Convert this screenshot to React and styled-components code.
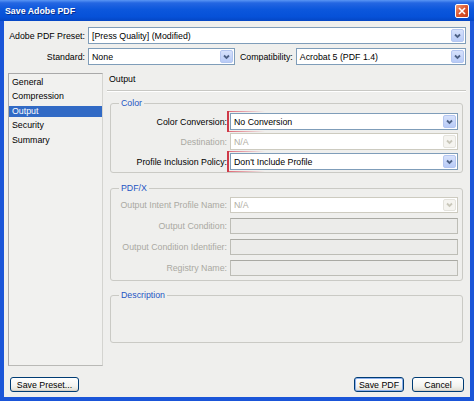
import React from "react";
import styled, { createGlobalStyle } from "styled-components";

const GlobalStyle = createGlobalStyle`
  html, body { margin: 0; padding: 0; background: #fff; }
  body { font-family: "Liberation Sans", Arial, sans-serif; }
`;

const Window = styled.div`
  width: 474px;
  height: 401px;
  display: flex;
  flex-direction: column;
  overflow: hidden;
  font-family: "Liberation Sans", Arial, sans-serif;
  font-size: 8.8px;
  color: #000;
`;

const TitleBar = styled.div`
  height: 21px;
  flex: none;
  display: flex;
  align-items: center;
  justify-content: space-between;
  padding: 0 5px;
  background: linear-gradient(
    to bottom,
    #5a96f4 0%,
    #2466e2 14%,
    #0c57dc 45%,
    #0651d8 80%,
    #0546c4 100%
  );
`;

const Title = styled.span`
  color: #fff;
  font-weight: bold;
  font-size: 8.8px;
  text-shadow: 1px 1px 0 #0a2e8a;
`;

const CloseButton = styled.div`
  width: 14px;
  height: 14px;
  box-sizing: border-box;
  border: 1px solid #fff;
  border-radius: 2px;
  background: linear-gradient(135deg, #f29a72, #dc5630 50%, #c23f1b);
  display: flex;
  align-items: center;
  justify-content: center;
`;

const Frame = styled.div`
  flex: 1;
  min-height: 0;
  display: flex;
  flex-direction: column;
  border: 4px solid #1a55d8;
  border-top: none;
  background: #efefed;
  padding: 6px 4px 5px;
`;

const TopRow = styled.div`
  display: flex;
  align-items: center;
  gap: 3px;
  & + & {
    margin-top: 4px;
  }
`;

const RowLabel = styled.span`
  flex: none;
  width: ${(p) => (p.$width ? `${p.$width}px` : "auto")};
  margin-left: ${(p) => p.$offset || 0}px;
  text-align: right;
  white-space: nowrap;
  color: ${(p) => (p.$disabled ? "#aaa9a2" : "#000")};
`;

const SelectBox = styled.div`
  height: ${(p) => p.$h || 17}px;
  box-sizing: border-box;
  display: flex;
  align-items: center;
  border: 1px solid ${(p) => (p.$disabled ? "#cdcbc0" : "#7f9db9")};
  background: #fff;
  color: ${(p) => (p.$disabled ? "#b0aea4" : "#000")};
  min-width: 0;
  ${(p) => (p.$width ? `width:${p.$width}px; flex:none;` : "flex:1;")}
`;

const SelectText = styled.span`
  flex: 1;
  padding-left: 3px;
  white-space: nowrap;
  overflow: hidden;
`;

const ArrowBtn = styled.span`
  width: 13px;
  align-self: stretch;
  margin: 1px;
  box-sizing: border-box;
  border-radius: 2px;
  border: 1px solid ${(p) => (p.$disabled ? "#e4e3dd" : "#b4c6f0")};
  background: ${(p) =>
    p.$disabled ? "#f5f4f0" : "linear-gradient(#d6e1fb, #b8cbf7)"};
  display: flex;
  align-items: center;
  justify-content: center;
`;

const TextBox = styled.div`
  height: 16px;
  box-sizing: border-box;
  border: 1px solid #bdbdb6;
  border-top-color: #a9a9a3;
  background: #ececea;
`;

const Main = styled.div`
  flex: 1;
  min-height: 0;
  display: flex;
  gap: 4px;
  margin-top: 8px;
`;

const Sidebar = styled.div`
  width: 95px;
  flex: none;
  box-sizing: border-box;
  border: 1px solid #a9a9a9;
  border-right-color: #d4d4d0;
  border-bottom-color: #b9b9b6;
  background: #f1f1ef;
  padding-top: 1px;
`;

const SideItem = styled.div`
  height: 14.5px;
  display: flex;
  align-items: center;
`;

const SideText = styled.span`
  flex: 1;
  height: 11px;
  line-height: 11px;
  padding-left: 3px;
  background: ${(p) => (p.$selected ? "#316ac5" : "transparent")};
  color: ${(p) => (p.$selected ? "#fff" : "#000")};
`;

const Panel = styled.div`
  flex: 1;
  min-width: 0;
  display: flex;
  flex-direction: column;
`;

const PanelHeader = styled.div`
  height: 18px;
  flex: none;
  box-sizing: border-box;
  padding-left: 2px;
  line-height: 13px;
  border-bottom: 1px solid #c8c8c4;
  box-shadow: 0 1px 0 #fff;
`;

const GroupBox = styled.fieldset`
  margin: ${(p) => p.$top}px 3px 0 3px;
  padding: ${(p) => p.$pt}px 4px ${(p) => p.$pb}px 0;
  border: 1px solid #cacac5;
  border-radius: 3px;
  min-width: 0;
`;

const Legend = styled.legend`
  margin-left: 8px;
  padding: 0 2px;
  line-height: 11px;
  color: #2556c4;
`;

const FormGrid = styled.div`
  display: grid;
  grid-template-columns: 116px 1fr;
  column-gap: 3px;
  row-gap: ${(p) => p.$gap}px;
  align-items: center;
`;

const GroupLabel = styled.span`
  text-align: right;
  white-space: nowrap;
  color: ${(p) => (p.$disabled ? "#aaa9a2" : "#000")};
`;

const Marked = styled.div`
  display: flex;
  margin: -2px 0 -2px -3px;
  padding: 2px 0 2px 1px;
  border-left: 2px solid #cf3a48;
  background: linear-gradient(to right, #e06a78, rgba(224, 106, 120, 0) 36px)
      top left / 100% 1px no-repeat,
    linear-gradient(to right, #e06a78, rgba(224, 106, 120, 0) 36px) bottom left /
      100% 1px no-repeat;
`;

const EmptyArea = styled.div`
  height: 41px;
`;

const Footer = styled.div`
  display: flex;
  justify-content: space-between;
  align-items: center;
  margin-top: 11px;
  padding: 0 2px;
`;

const BtnGroup = styled.div`
  display: flex;
  gap: 8px;
`;

const Btn = styled.button`
  width: ${(p) => p.$w}px;
  height: 15px;
  box-sizing: border-box;
  padding: 0;
  font: inherit;
  color: #000;
  border: 1px solid #003c74;
  border-radius: 3px;
  background: linear-gradient(#ffffff, #f4f4f0 60%, #e0ded4);
  box-shadow: ${(p) =>
    p.$default ? "inset 0 0 0 1px #8fb1ec" : "inset 0 -1px 0 #d6d0c5"};
`;

const Chevron = ({ disabled }) => (
  <svg width="7" height="6" viewBox="0 0 7 6">
    <path
      d="M1 1.5 L3.5 4 L6 1.5"
      fill="none"
      stroke={disabled ? "#c9c7ba" : "#4d6185"}
      strokeWidth="1.8"
    />
  </svg>
);

const Select = ({ value, width, disabled, h }) => (
  <SelectBox $width={width} $disabled={disabled} $h={h}>
    <SelectText>{value}</SelectText>
    <ArrowBtn $disabled={disabled}>
      <Chevron disabled={disabled} />
    </ArrowBtn>
  </SelectBox>
);

const navItems = ["General", "Compression", "Output", "Security", "Summary"];

export default function App() {
  return (
    <>
      <GlobalStyle />
      <Window>
        <TitleBar>
          <Title>Save Adobe PDF</Title>
          <CloseButton>
            <svg width="8" height="8" viewBox="0 0 8 8">
              <path
                d="M1 1 L7 7 M7 1 L1 7"
                stroke="#fff"
                strokeWidth="1.6"
                fill="none"
              />
            </svg>
          </CloseButton>
        </TitleBar>
        <Frame>
          <TopRow>
            <RowLabel $width={77}>Adobe PDF Preset:</RowLabel>
            <Select value="[Press Quality] (Modified)" />
          </TopRow>
          <TopRow>
            <RowLabel $width={77}>Standard:</RowLabel>
            <Select value="None" width={147} />
            <RowLabel $offset={2}>Compatibility:</RowLabel>
            <Select value="Acrobat 5 (PDF 1.4)" />
          </TopRow>
          <Main>
            <Sidebar>
              {navItems.map((item) => (
                <SideItem key={item}>
                  <SideText $selected={item === "Output"}>{item}</SideText>
                </SideItem>
              ))}
            </Sidebar>
            <Panel>
              <PanelHeader>Output</PanelHeader>
              <GroupBox $top={7} $pt={4} $pb={2}>
                <Legend>Color</Legend>
                <FormGrid $gap={3}>
                  <GroupLabel>Color Conversion:</GroupLabel>
                  <Marked>
                    <Select value="No Conversion" />
                  </Marked>
                  <GroupLabel $disabled>Destination:</GroupLabel>
                  <Select value="N/A" disabled />
                  <GroupLabel>Profile Inclusion Policy:</GroupLabel>
                  <Marked>
                    <Select value="Don't Include Profile" />
                  </Marked>
                </FormGrid>
              </GroupBox>
              <GroupBox $top={10} $pt={3} $pb={4}>
                <Legend>PDF/X</Legend>
                <FormGrid $gap={5}>
                  <GroupLabel $disabled>Output Intent Profile Name:</GroupLabel>
                  <Select value="N/A" disabled h={16} />
                  <GroupLabel $disabled>Output Condition:</GroupLabel>
                  <TextBox />
                  <GroupLabel $disabled>Output Condition Identifier:</GroupLabel>
                  <TextBox />
                  <GroupLabel $disabled>Registry Name:</GroupLabel>
                  <TextBox />
                </FormGrid>
              </GroupBox>
              <GroupBox $top={9} $pt={0} $pb={0}>
                <Legend>Description</Legend>
                <EmptyArea />
              </GroupBox>
            </Panel>
          </Main>
          <Footer>
            <Btn $w={69}>Save Preset...</Btn>
            <BtnGroup>
              <Btn $w={50} $default>
                Save PDF
              </Btn>
              <Btn $w={52}>Cancel</Btn>
            </BtnGroup>
          </Footer>
        </Frame>
      </Window>
    </>
  );
}
